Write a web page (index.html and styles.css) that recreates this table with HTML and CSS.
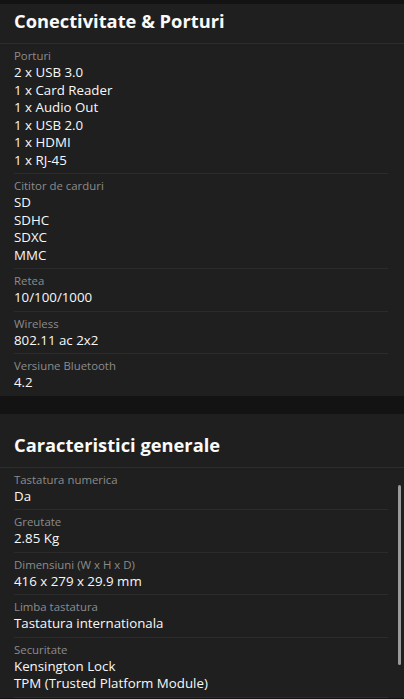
FILE: index.html
```html
<!DOCTYPE html>
<html lang="ro">
<head>
<meta charset="UTF-8">
<meta name="viewport" content="width=device-width, initial-scale=1.0">
<title>Specificatii</title>
<link rel="stylesheet" href="styles.css">
</head>
<body>

<div class="page">
    <section class="card card-scrolled">
        <h2 class="card-title">Conectivitate &amp; Porturi</h2>
        <div class="spec">
            <div class="spec-label">Porturi</div>
            <div class="spec-value">2 x USB 3.0</div>
            <div class="spec-value">1 x Card Reader</div>
            <div class="spec-value">1 x Audio Out</div>
            <div class="spec-value">1 x USB 2.0</div>
            <div class="spec-value">1 x HDMI</div>
            <div class="spec-value">1 x RJ-45</div>
        </div>
        <div class="spec">
            <div class="spec-label">Cititor de carduri</div>
            <div class="spec-value">SD</div>
            <div class="spec-value">SDHC</div>
            <div class="spec-value">SDXC</div>
            <div class="spec-value">MMC</div>
        </div>
        <div class="spec">
            <div class="spec-label">Retea</div>
            <div class="spec-value">10/100/1000</div>
        </div>
        <div class="spec">
            <div class="spec-label">Wireless</div>
            <div class="spec-value">802.11 ac 2x2</div>
        </div>
        <div class="spec">
            <div class="spec-label">Versiune Bluetooth</div>
            <div class="spec-value">4.2</div>
        </div>
    </section>

    <section class="card">
        <h2 class="card-title">Caracteristici generale</h2>
        <div class="spec">
            <div class="spec-label">Tastatura numerica</div>
            <div class="spec-value">Da</div>
        </div>
        <div class="spec">
            <div class="spec-label">Greutate</div>
            <div class="spec-value">2.85 Kg</div>
        </div>
        <div class="spec">
            <div class="spec-label">Dimensiuni (W x H x D)</div>
            <div class="spec-value">416 x 279 x 29.9 mm</div>
        </div>
        <div class="spec">
            <div class="spec-label">Limba tastatura</div>
            <div class="spec-value">Tastatura internationala</div>
        </div>
        <div class="spec">
            <div class="spec-label">Securitate</div>
            <div class="spec-value">Kensington Lock</div>
            <div class="spec-value">TPM (Trusted Platform Module)</div>
        </div>
    </section>
</div>

<div class="scrollbar"></div>

</body>
</html>
```

FILE: styles.css
```css
body, html {
    margin: 0;
    padding: 0;
    background: #131313;
    font-family: "Open Sans", "Noto Sans", Arial, sans-serif;
    color: #eeeeee;
    height: 100%;
    overflow: hidden;
}
.page {
    padding-top: 4px;
    display: flex;
    flex-direction: column;
    gap: 18px;
}
.card {
    background: #1f1f1f;
}
.card-title {
    margin: 0;
    padding: 17px 14px 8px;
    font-size: 18.3px;
    line-height: 28px;
    font-weight: 700;
    color: #fafafa;
    border-bottom: 1px solid #2d2d2d;
}
.card-scrolled .card-title {
    padding-top: 3px; /* page is scrolled a bit, top of card is cut */
}
.spec {
    margin: 0 16px 0 14px;
    padding: 4px 0 4px;
    border-bottom: 1px solid #2b2b2b;
}
.card-scrolled .spec:last-child {
    border-bottom: none;
}
.spec-label {
    font-size: 11.4px;
    line-height: 16px;
    color: #8c8c8c;
}
.spec-value {
    font-size: 13.3px;
    line-height: 17.5px;
    color: #f8f8f8;
}
.scrollbar {
    position: absolute;
    left: 398px;
    top: 485px;
    width: 3px;
    height: 180px;
    border-radius: 2px;
    background: #9a9a9a;
}
```
